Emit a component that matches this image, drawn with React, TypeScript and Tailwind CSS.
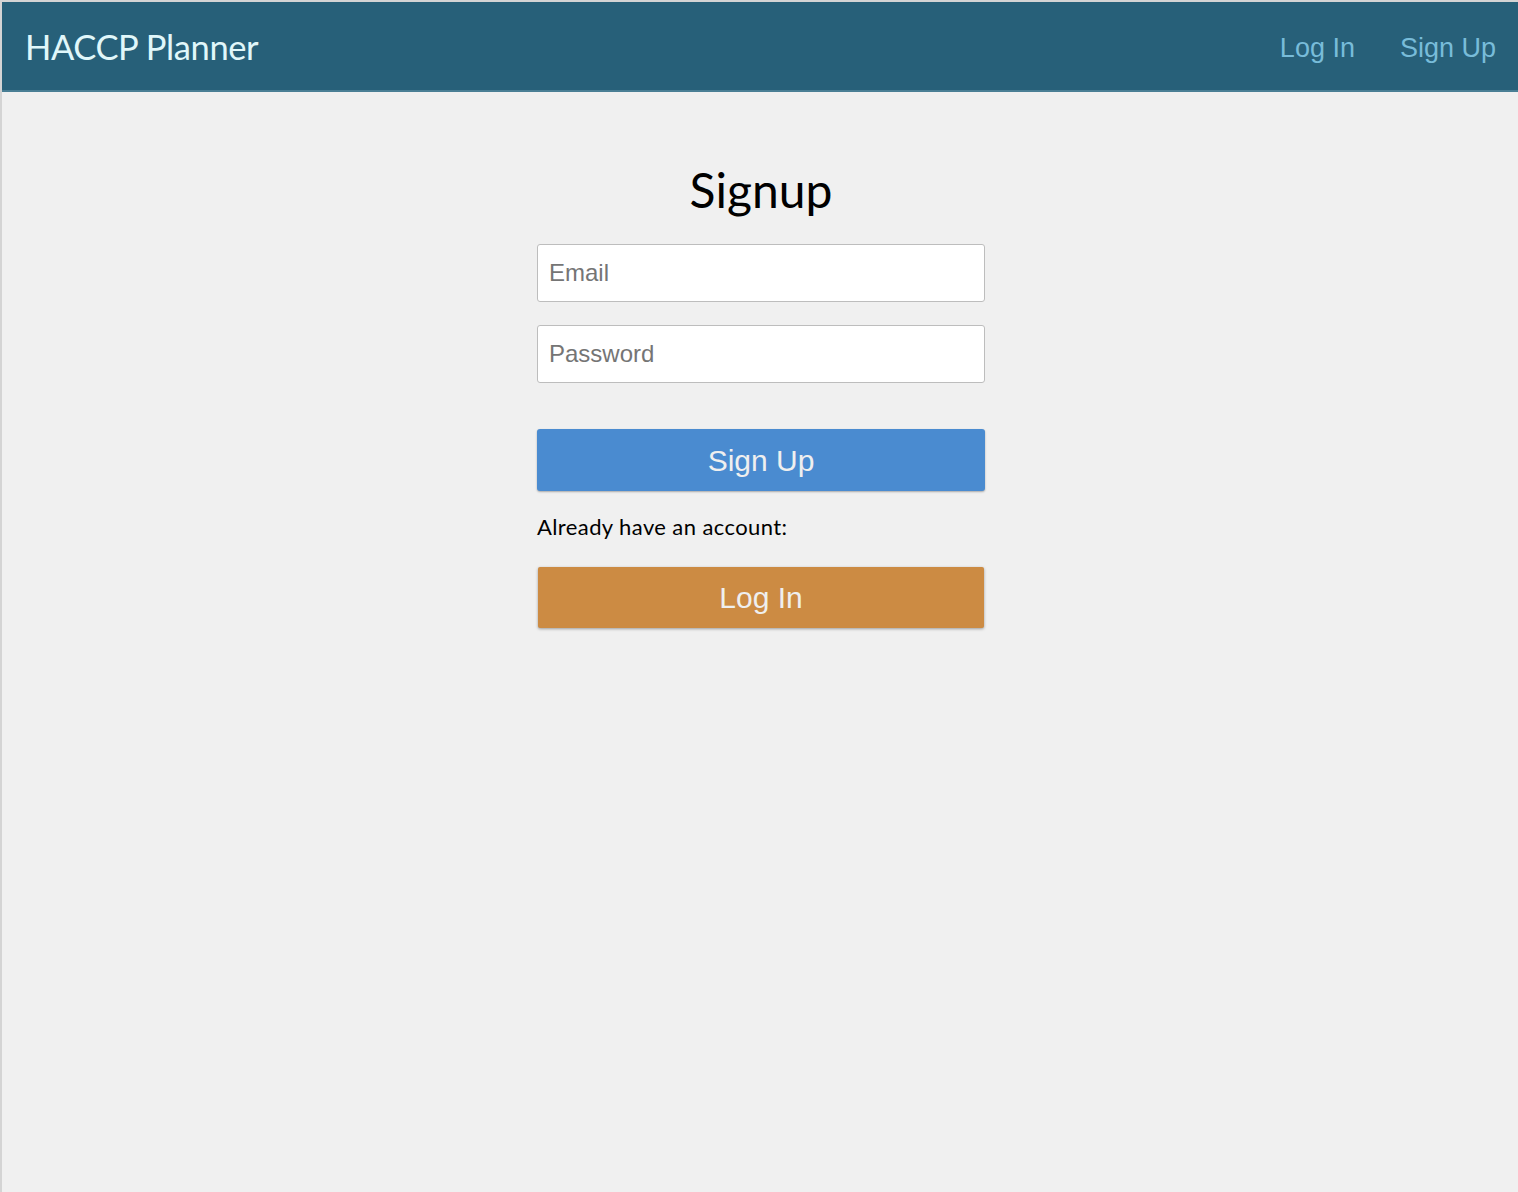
export default function App() {
  return (
    <div className="min-h-[1192px] bg-[#f0f0f0] border-t-2 border-l-2 border-[#d4d4d4] flex flex-col">
      <header className="h-[90px] bg-[#276079] border-b-2 border-[#4a7f95] flex items-center justify-between pl-[23px] pr-[22px]">
        <div className="text-[34.5px] text-[#e0f7fa] font-['Lato',sans-serif] tracking-[-0.4px] leading-none pt-[2px]">HACCP Planner</div>
        <nav className="flex items-center gap-[45px] font-['Liberation_Sans',sans-serif] text-[27px] text-[#78bcd9] leading-none pt-[4px]">
          <a>Log In</a>
          <a>Sign Up</a>
        </nav>
      </header>
      <main className="flex justify-center pl-[2px]">
        <div className="w-[448px] flex flex-col mt-[74px]">
          <h1 className="text-center text-[48px] leading-none font-['Lato',sans-serif] text-black mb-[30px]">Signup</h1>
          <input
            placeholder="Email"
            className="h-[58px] bg-white border border-[#bdbdbd] rounded-[3px] px-[11px] text-[24px] font-['Liberation_Sans',sans-serif] placeholder:text-[#757575] outline-none"
          />
          <input
            placeholder="Password"
            type="password"
            className="mt-[23px] h-[58px] bg-white border border-[#bdbdbd] rounded-[3px] px-[11px] text-[24px] font-['Liberation_Sans',sans-serif] placeholder:text-[#757575] outline-none"
          />
          <button className="mt-[46px] h-[62px] bg-[#4a8bd0] rounded-[3px] shadow-[0_1px_2px_rgba(0,0,0,0.3)] text-[30px] text-[#efefef] font-['Liberation_Sans',sans-serif]">
            Sign Up
          </button>
          <p className="mt-[25px] text-[22px] tracking-[0.4px] font-['Lato',sans-serif] text-black leading-none">Already have an account:</p>
          <button className="mt-[29px] mx-[1px] h-[61px] bg-[#cc8b43] rounded-[2px] shadow-[0_1px_3px_rgba(0,0,0,0.35)] text-[30px] text-[#efefef] font-['Liberation_Sans',sans-serif]">
            Log In
          </button>
        </div>
      </main>
    </div>
  );
}
